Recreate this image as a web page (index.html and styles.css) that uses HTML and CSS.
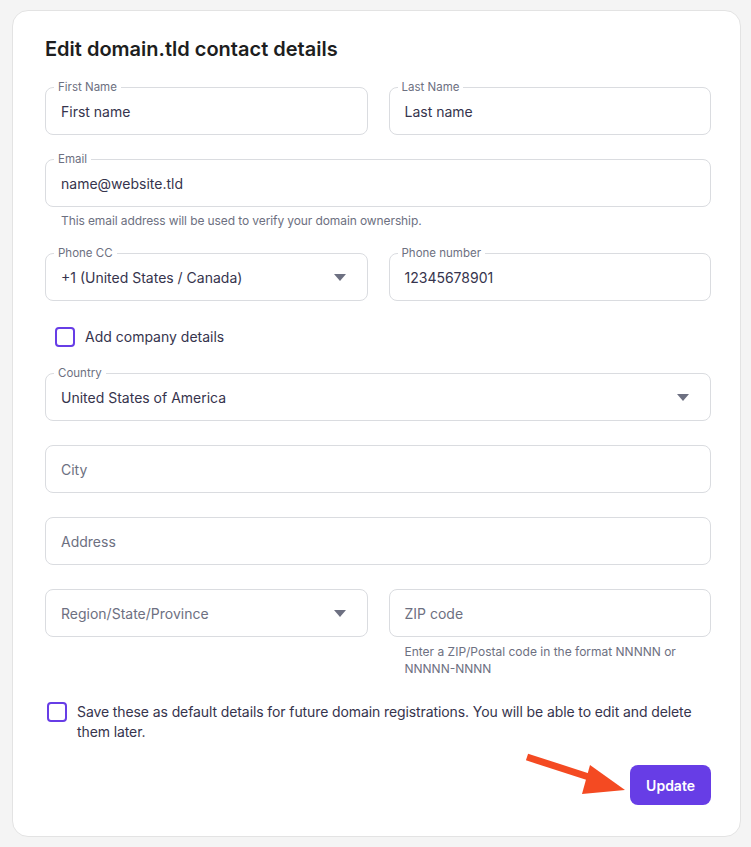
FILE: index.html
```html
<!DOCTYPE html>
<html>
<head lang="en">
    <meta charset="utf-8">
    <title>Edit contact details</title>
    <link rel="stylesheet" href="styles.css">
</head>
<body>
<div class="card">
    <h1 class="title">Edit domain.tld contact details</h1>

    <div class="row">
        <div class="field">
            <span class="label">First Name</span>
            <span class="value">First name</span>
        </div>
        <div class="field">
            <span class="label">Last Name</span>
            <span class="value">Last name</span>
        </div>
    </div>

    <div class="group">
        <div class="field">
            <span class="label">Email</span>
            <span class="value">name@website.tld</span>
        </div>
        <div class="hint">This email address will be used to verify your domain ownership.</div>
    </div>

    <div class="row">
        <div class="field select">
            <span class="label">Phone CC</span>
            <span class="value">+1 (United States / Canada)</span>
            <span class="caret"></span>
        </div>
        <div class="field">
            <span class="label">Phone number</span>
            <span class="value">12345678901</span>
        </div>
    </div>

    <label class="check company">
        <span class="box"></span>
        <span class="check-text">Add company details</span>
    </label>

    <div class="field select">
        <span class="label">Country</span>
        <span class="value">United States of America</span>
        <span class="caret"></span>
    </div>

    <div class="field">
        <span class="value empty">City</span>
    </div>

    <div class="field">
        <span class="value empty">Address</span>
    </div>

    <div class="row">
        <div class="field select">
            <span class="value empty">Region/State/Province</span>
            <span class="caret"></span>
        </div>
        <div class="group">
            <div class="field">
                <span class="value empty">ZIP code</span>
            </div>
            <div class="hint zip">Enter a ZIP/Postal code in the format NNNNN or NNNNN-NNNN</div>
        </div>
    </div>

    <label class="check save">
        <span class="box"></span>
        <span class="check-text">Save these as default details for future domain registrations. You will be able to edit and delete them later.</span>
    </label>

    <div class="actions">
        <svg class="pointer" width="110" height="44" viewBox="0 0 110 44">
            <path d="M7 4 L78 27" stroke="#f44a22" stroke-width="7" stroke-linecap="butt"/>
            <path d="M70 12 L105 37 L62 41 Z" fill="#f44a22"/>
        </svg>
        <div class="button">Update</div>
    </div>
</div>
</body>
</html>
```

FILE: styles.css
```css
body {
    margin: 0;
    padding: 10px 10px 10px 12px;
    background: #f4f4f4;
    font-family: "Inter", "Noto Sans", sans-serif;
    color: #1d1e20;
}

.card {
    position: relative;
    background: #fff;
    border: 1px solid #e3e3e3;
    border-radius: 16px;
    padding: 24px 29px 31px 32px;
}

.title {
    margin: 0 0 24px;
    font-size: 20px;
    line-height: 28px;
    font-weight: 600;
}

.row {
    display: grid;
    grid-template-columns: 1fr 1fr;
    column-gap: 21px;
    align-items: start;
}

.field {
    position: relative;
    display: flex;
    align-items: center;
    height: 48px;
    box-sizing: border-box;
    border: 1px solid #dadce0;
    border-radius: 8px;
    padding: 0 15px;
    margin-bottom: 24px;
    font-size: 14px;
}

.group .field {
    margin-bottom: 0;
}

.group {
    margin-bottom: 24px;
}

/* notched label sitting on the top border */
.label {
    position: absolute;
    left: 8px;
    top: -8px;
    padding: 0 4px;
    background: #fff;
    font-size: 11.5px;
    line-height: 14px;
    color: #6d7081;
}

.value {
    flex: 1;
    color: #36344d;
}

.value.empty {
    color: #6d7081;
}

.caret {
    width: 0;
    height: 0;
    margin-right: 6px;
    border-left: 6px solid transparent;
    border-right: 6px solid transparent;
    border-top: 7px solid #6d7081;
}

.hint {
    margin-top: 5px;
    padding-left: 16px;
    font-size: 12px;
    line-height: 17px;
    letter-spacing: -0.1px;
    color: #6d7081;
}

.hint.zip {
    margin-top: 6px;
    padding-right: 20px;
    letter-spacing: 0;
}

.check {
    display: flex;
    align-items: flex-start;
    margin-bottom: 24px;
    font-size: 14px;
    line-height: 20px;
    color: #36344d;
}

.check .box {
    flex: none;
    width: 20px;
    height: 20px;
    box-sizing: border-box;
    border: 2px solid #673de6;
    border-radius: 4px;
}

.company {
    padding-left: 10px;
    padding-top: 2px;
    height: 24px;
    box-sizing: border-box;
}

.company .box {
    margin-right: 10px;
}

.save {
    padding-left: 2px;
    padding-top: 1px;
    margin-bottom: 23px;
    letter-spacing: -0.1px;
}

.save .box {
    margin-right: 10px;
}

.actions {
    display: flex;
    justify-content: flex-end;
}

.button {
    height: 40px;
    padding: 0 16px;
    display: flex;
    align-items: center;
    border-radius: 8px;
    background: #673de6;
    color: #fff;
    font-size: 14px;
    font-weight: 600;
}

.pointer {
    position: absolute;
    right: 110px;
    bottom: 39px;
}
```
